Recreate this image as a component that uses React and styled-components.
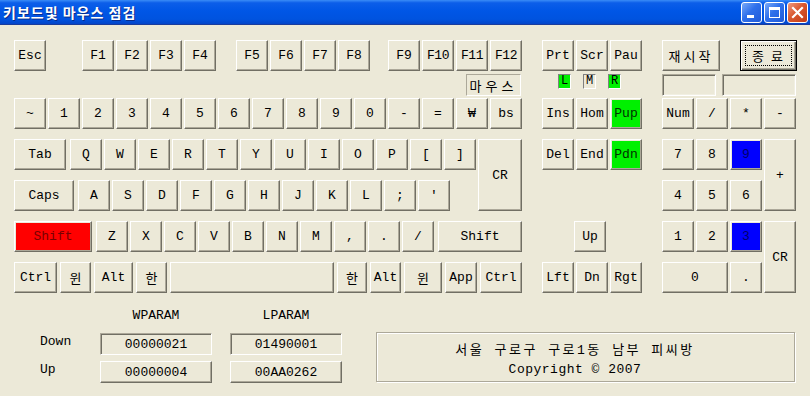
import React from 'react';
import styled, { createGlobalStyle } from 'styled-components';

const FACE = '#ECE9D8';

const GlobalStyle = createGlobalStyle`
  html, body { margin: 0; padding: 0; background: ${FACE}; }
  body {
    width: 810px; height: 396px; overflow: hidden;
    font-family: "Liberation Mono", "Noto Sans CJK KR", monospace;
    font-size: 13px; color: #000;
  }
  * { box-sizing: border-box; }
`;

const Window = styled.div`
  width: 810px;
  height: 396px;
  display: flex;
  flex-direction: column;
  background: ${FACE};
`;

const TitleBar = styled.div`
  height: 25px;
  flex: none;
  display: flex;
  align-items: center;
  padding: 0 2px 0 3px;
  background: linear-gradient(to bottom, #3A8CF7 0%, #0C5EE9 12%, #0056E6 45%, #0053DF 80%, #0345C9 100%);
  border-bottom: 1px solid #1A3C9C;
`;

const Title = styled.div`
  flex: 1;
  color: #fff;
  font-family: "Noto Sans CJK KR", sans-serif;
  font-weight: 700;
  font-size: 14px;
  line-height: 1;
  letter-spacing: 1px;
  text-shadow: 1px 1px 0 #0A2C8A;
`;

const CaptionButtons = styled.div`
  display: flex;
  gap: 2px;
`;

const CaptionButton = styled.div`
  width: 21px;
  height: 21px;
  border: 1px solid #fff;
  border-radius: 3px;
  background: ${p => (p.$close
    ? 'linear-gradient(135deg, #EE9A80 0%, #D9582F 45%, #C23C16 100%)'
    : 'linear-gradient(135deg, #7AAAF8 0%, #2F70EB 45%, #1F5AD8 100%)')};
  display: flex;
  align-items: center;
  justify-content: center;
`;

const Body = styled.div`
  padding: 15px 14px 0 14px;
  display: flex;
  flex-direction: column;
`;

const Keyboard = styled.div`
  display: flex;
  gap: 20px;
`;

const Column = styled.div`
  display: flex;
  flex-direction: column;
  width: ${p => p.$w}px;
  flex: none;
`;

const Row = styled.div`
  display: flex;
  height: ${p => p.$h ?? 31}px;
  margin-top: ${p => p.$mt ?? 0}px;
  gap: ${p => p.$gap ?? 2}px;
  justify-content: ${p => p.$justify || 'flex-start'};
  align-items: ${p => p.$align || 'stretch'};
  padding-left: ${p => p.$pl ?? 0}px;
  padding-right: ${p => p.$pr ?? 0}px;
`;

const Key = styled.button`
  flex: none;
  width: ${p => p.$w ?? 32}px;
  height: ${p => p.$h ?? 31}px;
  margin: 0 ${p => p.$mr ?? 0}px 0 ${p => p.$ml ?? 0}px;
  padding: 1px;
  font: inherit;
  font-size: 13px;
  line-height: 1;
  color: ${p => p.$fg || '#000'};
  background: ${p => p.$fill || FACE};
  background-clip: content-box;
  border: 1px solid;
  border-color: #FFFFFF #716F64 #716F64 #FFFFFF;
  box-shadow: inset -1px -1px 0 #ACA899;
  display: flex;
  align-items: center;
  justify-content: center;
  white-space: pre;
  letter-spacing: ${p => p.$ls ?? 0}px;
  cursor: default;
  grid-column: ${p => p.$col || 'auto'};
  grid-row: ${p => p.$row || 'auto'};
`;

const DefaultButton = styled(Key)`
  border: 1px solid #000;
  box-shadow: inset 1px 1px 0 #fff, inset -1px -1px 0 #716F64, inset -2px -2px 0 #ACA899;
  padding: 4px;
`;

const FocusRing = styled.span`
  flex: 1;
  align-self: stretch;
  border: 1px dotted #000;
  display: flex;
  align-items: center;
  justify-content: center;
  font-family: "Noto Sans CJK KR", sans-serif;
  letter-spacing: 2px;
`;

const HangulLabel = styled.span`
  font-family: "Noto Sans CJK KR", sans-serif;
  font-size: 13px;
  letter-spacing: ${p => p.$ls ?? 0}px;
  line-height: 1;
`;

const Stack = styled.div`
  display: flex;
  flex-direction: column;
`;

const SplitBlock = styled.div`
  display: flex;
  gap: 2px;
  margin-top: ${p => p.$mt ?? 0}px;
`;

const SunkenBox = styled.div`
  flex: none;
  width: ${p => p.$w}px;
  height: ${p => p.$h ?? 22}px;
  border: 1px solid;
  border-color: #ACA899 #FFFFFF #FFFFFF #ACA899;
  box-shadow: ${p => (p.$thin ? 'none' : 'inset 1px 1px 0 #716F64, inset -1px -1px 0 #F1EFE2')};
  background: ${FACE};
  display: flex;
  align-items: center;
  justify-content: center;
`;

const Lamp = styled.div`
  width: 13px;
  height: 15px;
  border: 1px solid;
  border-color: #808080 #FFFFFF #FFFFFF #808080;
  background: ${p => (p.$on ? '#00F000' : FACE)};
  font-size: 12px;
  line-height: 13px;
  text-align: center;
`;

const NumPad = styled.div`
  display: grid;
  grid-template-columns: repeat(4, 32px);
  grid-template-rows: repeat(5, 31px);
  column-gap: 2px;
  row-gap: 10px;
  margin-top: 2px;
`;

const Bottom = styled.div`
  display: flex;
  align-items: flex-start;
  margin-top: 15px;
`;

const Params = styled.div`
  display: flex;
  flex-direction: column;
  width: 328px;
  flex: none;
`;

const ParamRow = styled.div`
  display: flex;
  align-items: flex-start;
  height: ${p => p.$h}px;
  margin-top: ${p => p.$mt ?? 0}px;
`;

const RowLabel = styled.div`
  width: 86px;
  padding-left: 26px;
  line-height: 18px;
`;

const ParamHead = styled.div`
  width: 112px;
  text-align: center;
  line-height: 16px;
  margin-right: ${p => p.$mr ?? 0}px;
`;

const ValueBox = styled.div`
  width: 112px;
  height: 22px;
  margin-right: ${p => p.$mr ?? 0}px;
  border: 1px solid;
  border-color: ${p => (p.$raised ? '#FFFFFF #716F64 #716F64 #FFFFFF' : '#ACA899 #FFFFFF #FFFFFF #ACA899')};
  box-shadow: ${p => (p.$raised ? 'inset -1px -1px 0 #ACA899' : 'inset 1px 1px 0 #716F64')};
  display: flex;
  align-items: center;
  justify-content: center;
  padding-top: 1px;
`;

const InfoBox = styled.div`
  margin-left: 34px;
  margin-top: 24px;
  width: 419px;
  height: 50px;
  border: 1px solid #ACA899;
  box-shadow: 1px 1px 0 #fff, inset 1px 1px 0 #fff;
  padding: 8px 21px 0 0;
  text-align: center;
  line-height: 19px;
`;

const InfoLine = styled.div`
  letter-spacing: ${p => p.$ls ?? 0}px;
  white-space: pre;
`;

const MinIcon = () => (
  <svg width="19" height="19" viewBox="0 0 19 19">
    <rect x="5" y="12" width="7" height="3" fill="#fff" />
  </svg>
);
const MaxIcon = () => (
  <svg width="19" height="19" viewBox="0 0 19 19">
    <rect x="4.5" y="4.5" width="10" height="10" fill="none" stroke="#fff" strokeWidth="1" />
    <rect x="4" y="4" width="11" height="3" fill="#fff" />
  </svg>
);
const CloseIcon = () => (
  <svg width="19" height="19" viewBox="0 0 19 19">
    <path d="M5 5 L14 14 M14 5 L5 14" stroke="#fff" strokeWidth="2.2" strokeLinecap="square" />
  </svg>
);

const numberRow = ['~', '1', '2', '3', '4', '5', '6', '7', '8', '9', '0', '-', '=', '₩', 'bs'];
const qRow = ['Q', 'W', 'E', 'R', 'T', 'Y', 'U', 'I', 'O', 'P', '[', ']'];
const aRow = ['A', 'S', 'D', 'F', 'G', 'H', 'J', 'K', 'L', ';', "'"];
const zRow = ['Z', 'X', 'C', 'V', 'B', 'N', 'M', ',', '.', '/'];
const bottomRow = [
  { t: 'Ctrl', w: 43 },
  { t: '윈', w: 31, k: true },
  { t: 'Alt', w: 39 },
  { t: '한', w: 31, k: true },
  { t: '', w: 164 },
  { t: '한', w: 30, k: true },
  { t: 'Alt', w: 31 },
  { t: '윈', w: 38, k: true },
  { t: 'App', w: 32 },
  { t: 'Ctrl', w: 42 },
];

const fGroups = [
  { ml: 34, keys: ['F1', 'F2', 'F3', 'F4'] },
  { ml: 18, keys: ['F5', 'F6', 'F7', 'F8'] },
  { ml: 16, keys: ['F9', 'F10', 'F11', 'F12'] },
];

export default function App() {
  return (
    <>
      <GlobalStyle />
      <Window>
        <TitleBar>
          <Title>키보드및 마우스 점검</Title>
          <CaptionButtons>
            <CaptionButton><MinIcon /></CaptionButton>
            <CaptionButton><MaxIcon /></CaptionButton>
            <CaptionButton $close><CloseIcon /></CaptionButton>
          </CaptionButtons>
        </TitleBar>

        <Body>
          <Keyboard>
            <Column $w={508}>
              <Row>
                <Key>Esc</Key>
                {fGroups.map(g =>
                  g.keys.map((k, i) => (
                    <Key key={k} $ml={i === 0 ? g.ml : 0} $ls={k.length > 2 ? -0.5 : 0}>{k}</Key>
                  ))
                )}
              </Row>
              <Row $h={22} $mt={3} $justify="flex-end" $pr={1}>
                <SunkenBox $w={55} $thin>
                  <HangulLabel $ls={4}>마우스</HangulLabel>
                </SunkenBox>
              </Row>
              <Row $mt={2}>
                {numberRow.map(k => <Key key={k}>{k}</Key>)}
              </Row>
              <SplitBlock $mt={10}>
                <Stack>
                  <Row>
                    <Key $w={52} $mr={2}>Tab</Key>
                    {qRow.map(k => <Key key={k}>{k}</Key>)}
                  </Row>
                  <Row $mt={10}>
                    <Key $w={60} $mr={2}>Caps</Key>
                    {aRow.map(k => <Key key={k}>{k}</Key>)}
                  </Row>
                </Stack>
                <Key $w={44} $h={72}>CR</Key>
              </SplitBlock>
              <Row $mt={10}>
                <Key $w={78} $mr={2} $fill="#FF0000" $fg="#7A0000">Shift</Key>
                {zRow.map(k => <Key key={k}>{k}</Key>)}
                <Key $w={84} $ml={2}>Shift</Key>
              </Row>
              <Row $mt={10} $gap={3}>
                {bottomRow.map((k, i) => (
                  <Key key={i} $w={k.w}>
                    {k.k ? <HangulLabel>{k.t}</HangulLabel> : k.t}
                  </Key>
                ))}
              </Row>
            </Column>

            <Column $w={100}>
              <Row>
                <Key>Prt</Key>
                <Key>Scr</Key>
                <Key>Pau</Key>
              </Row>
              <Row $h={22} $mt={3} $pl={16} $gap={12} $align="flex-start">
                <Lamp $on>L</Lamp>
                <Lamp>M</Lamp>
                <Lamp $on>R</Lamp>
              </Row>
              <Row $mt={2}>
                <Key>Ins</Key>
                <Key>Hom</Key>
                <Key $fill="#00F000" $fg="#003000">Pup</Key>
              </Row>
              <Row $mt={10}>
                <Key>Del</Key>
                <Key>End</Key>
                <Key $fill="#00F000" $fg="#003000">Pdn</Key>
              </Row>
              <Row $mt={10} />
              <Row $mt={10}>
                <Key $ml={32}>Up</Key>
              </Row>
              <Row $mt={10}>
                <Key>Lft</Key>
                <Key>Dn</Key>
                <Key>Rgt</Key>
              </Row>
            </Column>

            <Column $w={134}>
              <Row>
                <Key $w={58}><HangulLabel $ls={3}>재시작</HangulLabel></Key>
                <DefaultButton $w={57} $ml={18}>
                  <FocusRing>종 료</FocusRing>
                </DefaultButton>
              </Row>
              <Row $h={22} $mt={3} $gap={6}>
                <SunkenBox $w={54} />
                <SunkenBox $w={74} />
              </Row>
              <NumPad>
                <Key>Num</Key>
                <Key>/</Key>
                <Key>*</Key>
                <Key>-</Key>
                <Key>7</Key>
                <Key>8</Key>
                <Key $fill="#0000FF" $fg="#00006A">9</Key>
                <Key $h={72} $col="4" $row="2 / 4">+</Key>
                <Key $col="1" $row="3">4</Key>
                <Key $col="2" $row="3">5</Key>
                <Key $col="3" $row="3">6</Key>
                <Key $col="1" $row="4">1</Key>
                <Key $col="2" $row="4">2</Key>
                <Key $col="3" $row="4" $fill="#0000FF" $fg="#00006A">3</Key>
                <Key $h={72} $col="4" $row="4 / 6">CR</Key>
                <Key $w={66} $col="1 / 3" $row="5">0</Key>
                <Key $col="3" $row="5">.</Key>
              </NumPad>
            </Column>
          </Keyboard>

          <Bottom>
            <Params>
              <ParamRow $h={16}>
                <RowLabel />
                <ParamHead $mr={18}>WPARAM</ParamHead>
                <ParamHead>LPARAM</ParamHead>
              </ParamRow>
              <ParamRow $h={22} $mt={9}>
                <RowLabel>Down</RowLabel>
                <ValueBox $mr={18}>00000021</ValueBox>
                <ValueBox>01490001</ValueBox>
              </ParamRow>
              <ParamRow $h={22} $mt={6}>
                <RowLabel>Up</RowLabel>
                <ValueBox $mr={18} $raised>00000004</ValueBox>
                <ValueBox $raised>00AA0262</ValueBox>
              </ParamRow>
            </Params>
            <InfoBox>
              <InfoLine $ls={2.5}>서울 구로구 구로1동 남부 피씨방</InfoLine>
              <InfoLine $ls={0.5}>Copyright © 2007</InfoLine>
            </InfoBox>
          </Bottom>
        </Body>
      </Window>
    </>
  );
}
